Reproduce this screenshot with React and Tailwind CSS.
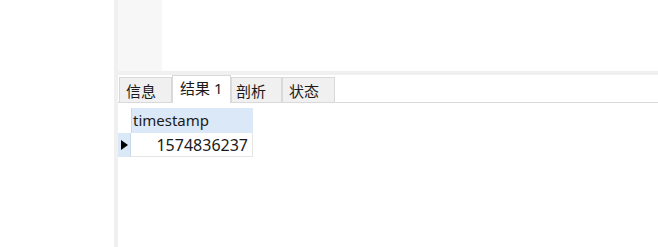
import React from "react";

const tabs = [
  { label: "信息", width: "w-[53px]", pl: "pl-[6px]" },
  { label: "结果 1", width: "w-[59px]", pl: "pl-[7px]", active: true },
  { label: "剖析", width: "w-[51px]", pl: "pl-[4px]" },
  { label: "状态", width: "w-[53px]", pl: "pl-[6px]" },
];

const App = () => {
  return (
    <div
      className="flex w-[658px] h-[247px] bg-white overflow-hidden text-[#1a1a1a]"
      style={{ fontFamily: '"Noto Sans", "Noto Sans CJK SC", sans-serif' }}
    >
      {/* left blank pane */}
      <div className="w-[114px] shrink-0 bg-white" />
      <div className="w-[4px] shrink-0 bg-[#f0f0f0]" />

      <div className="flex-1 flex flex-col">
        {/* editor area */}
        <div className="h-[71px] flex">
          <div className="w-[44px] bg-[#f7f7f7]" />
          <div className="flex-1 bg-white" />
        </div>
        <div className="h-[4px] bg-[#f0f0f0]" />

        {/* tabs */}
        <div className="h-[28px] flex items-end pl-[1px] border-b border-[#d9d9d9]">
          {tabs.map((tab) => (
            <div
              key={tab.label}
              className={`${tab.width} ${tab.pl} flex items-center text-[15px] leading-none border-x border-t border-[#d9d9d9] ${
                tab.active
                  ? "h-[28px] -mb-px bg-white pb-[2px]"
                  : "h-[25px] bg-[#f0f0f0] pt-[2px]"
              }`}
            >
              {tab.label}
            </div>
          ))}
        </div>

        {/* result grid */}
        <div className="mt-[5px] grid grid-cols-[13px_122px] text-[15px] leading-none">
          <div className="h-[25px] bg-white" />
          <div className="h-[25px] flex items-center pl-[1px] bg-[#dae8f7] border-l border-[#c9d9ea]">
            timestamp
          </div>
          <div className="h-[24px] flex items-center justify-center bg-[#dae8f7] border-r border-[#c9d9ea]">
            <svg width="7" height="10" viewBox="0 0 7 10">
              <path d="M0 0 L7 5 L0 10 Z" fill="#000" />
            </svg>
          </div>
          <div className="h-[24px] flex items-center justify-end pr-[4px] text-[16px] border-r border-b border-[#e6e6e6]">
            1574836237
          </div>
        </div>
      </div>
    </div>
  );
};

export default App;
